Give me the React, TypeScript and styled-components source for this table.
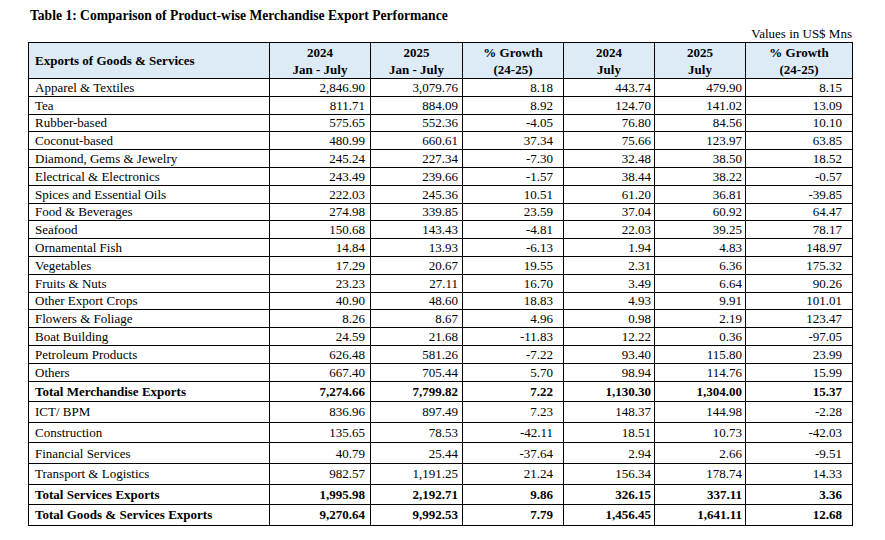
import React from "react";
import styled, { createGlobalStyle } from "styled-components";

const Global = createGlobalStyle`
  html, body { margin: 0; padding: 0; background: #ffffff; }
  body { font-family: "Liberation Serif", "Times New Roman", serif; color: #000000; }
`;

const Page = styled.div`
  width: 885px;
  height: 540px;
  padding: 8px 0 0 28px;
  box-sizing: border-box;
`;

const Title = styled.div`
  font-weight: bold;
  font-size: 13.6px;
  line-height: 16px;
  margin-left: 2px;
`;

const Units = styled.div`
  width: 824px;
  text-align: right;
  font-size: 13px;
  line-height: 16px;
  margin-top: 2px;
`;

const Table = styled.table`
  width: 824px;
  border-collapse: collapse;
  table-layout: fixed;
  font-size: 13px;
`;

const HeadCell = styled.th<{ $align?: string }>`
  background: #ddebf7;
  border: 1px solid #000;
  font-weight: bold;
  font-size: 13px;
  line-height: 17px;
  height: 35px;
  padding: 0 6px;
  text-align: ${(p) => p.$align || "center"};
  vertical-align: middle;
`;

const Row = styled.tr<{ $h: number }>`
  height: ${(p) => p.$h}px;
`;

const NameCell = styled.td<{ $bold?: boolean }>`
  border: 1px solid #000;
  padding: 0 6px;
  line-height: 15px;
  font-weight: ${(p) => (p.$bold ? "bold" : "normal")};
  white-space: nowrap;
  vertical-align: middle;
`;

const NumCell = styled.td<{ $bold?: boolean; $pad: number }>`
  border: 1px solid #000;
  padding: 0 ${(p) => p.$pad}px 0 0;
  line-height: 15px;
  text-align: right;
  font-weight: ${(p) => (p.$bold ? "bold" : "normal")};
  white-space: nowrap;
  vertical-align: middle;
`;

const widths = [241, 101, 92, 101, 91, 91, 107];
const pads = [5, 4, 10, 3, 3, 10];

type R = [string, string, string, string, string, string, string, boolean?];

const goods: R[] = [
  ["Apparel & Textiles", "2,846.90", "3,079.76", "8.18", "443.74", "479.90", "8.15"],
  ["Tea", "811.71", "884.09", "8.92", "124.70", "141.02", "13.09"],
  ["Rubber-based", "575.65", "552.36", "-4.05", "76.80", "84.56", "10.10"],
  ["Coconut-based", "480.99", "660.61", "37.34", "75.66", "123.97", "63.85"],
  ["Diamond, Gems & Jewelry", "245.24", "227.34", "-7.30", "32.48", "38.50", "18.52"],
  ["Electrical & Electronics", "243.49", "239.66", "-1.57", "38.44", "38.22", "-0.57"],
  ["Spices and Essential Oils", "222.03", "245.36", "10.51", "61.20", "36.81", "-39.85"],
  ["Food & Beverages", "274.98", "339.85", "23.59", "37.04", "60.92", "64.47"],
  ["Seafood", "150.68", "143.43", "-4.81", "22.03", "39.25", "78.17"],
  ["Ornamental Fish", "14.84", "13.93", "-6.13", "1.94", "4.83", "148.97"],
  ["Vegetables", "17.29", "20.67", "19.55", "2.31", "6.36", "175.32"],
  ["Fruits & Nuts", "23.23", "27.11", "16.70", "3.49", "6.64", "90.26"],
  ["Other Export Crops", "40.90", "48.60", "18.83", "4.93", "9.91", "101.01"],
  ["Flowers & Foliage", "8.26", "8.67", "4.96", "0.98", "2.19", "123.47"],
  ["Boat Building", "24.59", "21.68", "-11.83", "12.22", "0.36", "-97.05"],
  ["Petroleum Products", "626.48", "581.26", "-7.22", "93.40", "115.80", "23.99"],
  ["Others", "667.40", "705.44", "5.70", "98.94", "114.76", "15.99"],
];

const services: R[] = [
  ["Total Merchandise Exports", "7,274.66", "7,799.82", "7.22", "1,130.30", "1,304.00", "15.37", true],
  ["ICT/ BPM", "836.96", "897.49", "7.23", "148.37", "144.98", "-2.28"],
  ["Construction", "135.65", "78.53", "-42.11", "18.51", "10.73", "-42.03"],
  ["Financial Services", "40.79", "25.44", "-37.64", "2.94", "2.66", "-9.51"],
  ["Transport & Logistics", "982.57", "1,191.25", "21.24", "156.34", "178.74", "14.33"],
  ["Total Services Exports", "1,995.98", "2,192.71", "9.86", "326.15", "337.11", "3.36", true],
  ["Total Goods & Services Exports", "9,270.64", "9,992.53", "7.79", "1,456.45", "1,641.11", "12.68", true],
];

const heads: [string, string][] = [
  ["2024", "Jan - July"],
  ["2025", "Jan - July"],
  ["% Growth", "(24-25)"],
  ["2024", "July"],
  ["2025", "July"],
  ["% Growth", "(24-25)"],
];

function DataRow({ r, h }: { r: R; h: number }) {
  const bold = !!r[7];
  return (
    <Row $h={h}>
      <NameCell $bold={bold}>{r[0]}</NameCell>
      {r.slice(1, 7).map((v, i) => (
        <NumCell key={i} $bold={bold} $pad={pads[i]}>
          {v as string}
        </NumCell>
      ))}
    </Row>
  );
}

export default function App() {
  return (
    <>
      <Global />
      <Page>
        <Title>Table 1: Comparison of Product-wise Merchandise Export Performance</Title>
        <Units>Values in US$ Mns</Units>
        <Table>
          <colgroup>
            {widths.map((w, i) => (
              <col key={i} style={{ width: w }} />
            ))}
          </colgroup>
          <thead>
            <tr>
              <HeadCell $align="left">Exports of Goods &amp; Services</HeadCell>
              {heads.map(([a, b], i) => (
                <HeadCell key={i}>
                  {a}
                  <br />
                  {b}
                </HeadCell>
              ))}
            </tr>
          </thead>
          <tbody>
            {goods.map((r, i) => (
              <DataRow key={i} r={r} h={17.8} />
            ))}
            {services.map((r, i) => (
              <DataRow key={i} r={r} h={20.6} />
            ))}
          </tbody>
        </Table>
      </Page>
    </>
  );
}
